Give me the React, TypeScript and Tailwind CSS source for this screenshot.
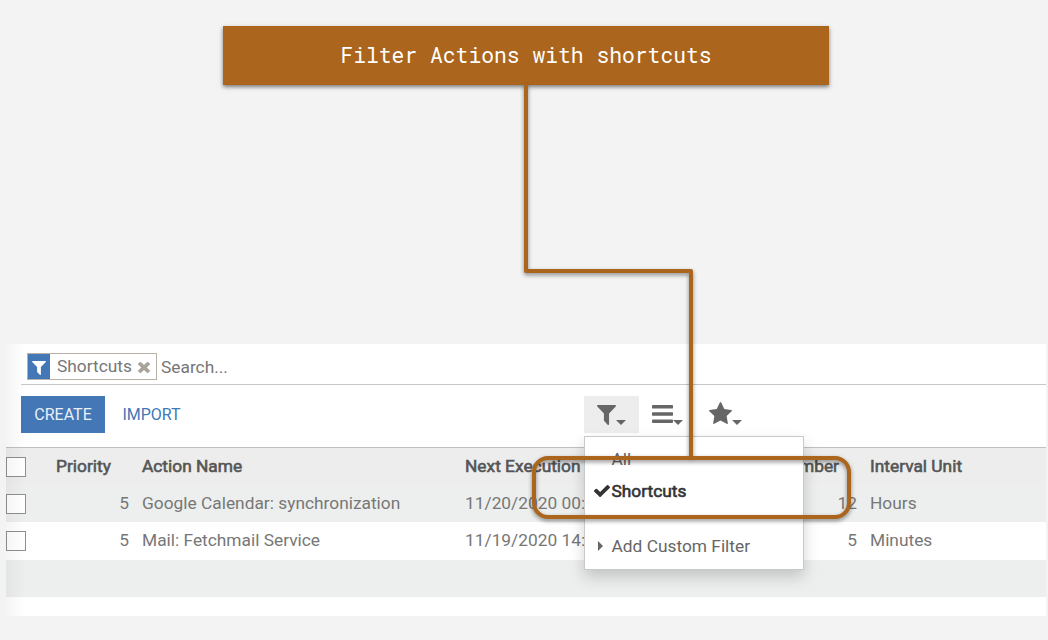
import React from "react";

type IconProps = { className?: string };

const FilterIcon = ({ className }: IconProps) => (
  <svg viewBox="189 256 1414 1408" className={className} fill="currentColor" preserveAspectRatio="none">
    <path d="M1595 295q17 41-14 70l-493 493v742q0 42-39 59-13 5-25 5-27 0-45-19l-256-256q-19-19-19-45v-486l-493-493q-31-29-14-70 17-39 59-39h1280q42 0 59 39z" />
  </svg>
);

const BarsIcon = ({ className }: IconProps) => (
  <svg viewBox="0 0 1536 1280" className={className} fill="currentColor" preserveAspectRatio="none">
    <rect width="1536" height="256" rx="64" />
    <rect y="512" width="1536" height="256" rx="64" />
    <rect y="1024" width="1536" height="256" rx="64" />
  </svg>
);

const StarIcon = ({ className }: IconProps) => (
  <svg viewBox="64 32 1664 1587" className={className} fill="currentColor" preserveAspectRatio="none">
    <path d="M1728 647q0 22-26 48l-363 354 86 500q1 7 1 20 0 21-10.5 35.5t-30.5 14.5q-19 0-40-12l-449-236-449 236q-22 12-40 12-21 0-31.5-14.5t-10.5-35.5q0-6 2-20l86-500-364-354q-25-27-25-48 0-37 56-46l502-73 225-455q19-41 49-41t49 41l225 455 502 73q56 9 56 46z" />
  </svg>
);

const CheckIcon = ({ className }: IconProps) => (
  <svg viewBox="121 334 1550 1188" className={className} fill="currentColor" preserveAspectRatio="none">
    <path d="M1671 566q0 40-28 68l-724 724-136 136q-28 28-68 28t-68-28l-136-136-362-362q-28-28-28-68t28-68l136-136q28-28 68-28t68 28l294 295 656-657q28-28 68-28t68 28l136 136q28 28 28 68z" />
  </svg>
);

const TimesIcon = ({ className }: IconProps) => (
  <svg viewBox="302 366 1188 1188" className={className} fill="currentColor" preserveAspectRatio="none">
    <path d="M1490 1322q0 40-28 68l-136 136q-28 28-68 28t-68-28l-294-294-294 294q-28 28-68 28t-68-28l-136-136q-28-28-28-68t28-68l294-294-294-294q-28-28-28-68t28-68l136-136q28-28 68-28t68 28l294 294 294-294q28-28 68-28t68 28l136 136q28 28 28 68t-28 68l-294 294 294 294q28 28 28 68z" />
  </svg>
);

const Caret = ({ className }: IconProps) => (
  <svg viewBox="0 0 10 5" className={className} fill="currentColor" preserveAspectRatio="none">
    <path d="M0 0h10l-5 5z" />
  </svg>
);

const Checkbox = () => <span className="h-5 w-5 border border-[#8f8f8f] bg-white" />;

const GRID = "grid grid-cols-[50px_86px_323px_235px_170px_1fr] items-center";

const rows = [
  { name: "Google Calendar: synchronization", next: "11/20/2020 00:", number: "12", unit: "Hours", bg: "bg-[#edefee]" },
  { name: "Mail: Fetchmail Service", next: "11/19/2020 14:", number: "5", unit: "Minutes", bg: "bg-white" },
];

function FilterMenu() {
  return (
    <div className="absolute top-[40px] left-0 z-10 flex h-[134px] w-[220px] flex-col border border-[#c9c9c9] bg-white pt-[7px] text-[#666] shadow-[0_7px_14px_rgba(0,0,0,0.18)]">
      <div className="flex h-[31px] items-center pb-px pl-[26.5px]">All</div>
      <div className="flex h-8 items-center pl-[9px] text-[#333]">
        <CheckIcon className="mr-[1.5px] h-3 w-4" />
        <span className="[-webkit-text-stroke:0.6px_currentColor]">Shortcuts</span>
      </div>
      <div className="mt-[10px] h-px bg-[#e5e5e5]" />
      <div className="mt-[12px] flex h-8 items-center pl-[13px]">
        <svg viewBox="0 0 5 10" className="mr-[8.5px] h-[10px] w-[5px]" fill="currentColor">
          <path d="M0 0l5 5-5 5z" />
        </svg>
        Add Custom Filter
      </div>
    </div>
  );
}

export default function App() {
  return (
    <div className="relative flex h-[640px] w-[1048px] flex-col overflow-hidden bg-[#f3f3f3] font-['Roboto','Liberation_Sans',sans-serif] text-[17.33px] leading-5 text-[#777]">
      <header className="mt-[26px] ml-[223px] flex h-[59px] w-[606px] shrink-0 items-center justify-center bg-[#ab651d] pb-[2px] font-['Roboto_Mono','DejaVu_Sans_Mono',monospace] text-[21.33px] text-white shadow-[0_2px_4px_rgba(0,0,0,0.5)]">
        Filter Actions with shortcuts
      </header>

      <main className="relative mt-[259px] ml-[6px] flex h-[272px] w-[1040px] shrink-0 flex-col bg-white">
        <div className="ml-[15px] flex h-[41px] shrink-0 items-center border-b border-[#c8c8c8] pt-[5px] pl-[6px]">
          <div className="flex h-[27px] w-[130px] items-center border border-[#b8b2a8]">
            <span className="flex h-full w-[22px] items-center justify-center bg-[#4377b6] text-white">
              <FilterIcon className="mt-[2px] h-[14px] w-[14px]" />
            </span>
            <span className="ml-[7px] w-[75px] pb-[2px]">Shortcuts</span>
            <TimesIcon className="mt-[2px] ml-[6px] h-[11px] w-3 text-[#aaa399]" />
          </div>
          <span className="mt-px ml-1">Search...</span>
        </div>

        <div className="flex h-[62px] shrink-0 pt-[11px] pl-[15px]">
          <button className="h-[37px] w-[84px] bg-[#4377b6] text-[16px] text-[#e9eff7]">CREATE</button>
          <button className="ml-[17px] h-[37px] w-[59px] text-[16px] text-[#4377b6]">IMPORT</button>
          <div className="relative ml-[403px] flex h-[37px] text-[#666]">
            <div className="flex h-[37px] w-[55px] bg-[#ededed] pt-[9px] pl-[13px]">
              <FilterIcon className="h-5 w-[19px]" />
              <Caret className="mt-[15px] h-[5px] w-[10px]" />
            </div>
            <div className="flex pt-[9px] pl-[13px]">
              <BarsIcon className="h-[18px] w-[21px]" />
              <Caret className="mt-[15px] h-[5px] w-[10px]" />
            </div>
            <div className="flex pt-[6px] pl-[26px]">
              <StarIcon className="h-[22px] w-[23px]" />
              <Caret className="mt-[18px] h-[5px] w-[10px]" />
            </div>
            <FilterMenu />
          </div>
        </div>

        <section className="flex flex-col">
          <div className={`${GRID} h-[38px] border-t border-[#c0c0c0] bg-[#ededed] text-[#555] [-webkit-text-stroke:0.6px_currentColor]`}>
            <Checkbox />
            <span className="pb-[2px]">Priority</span>
            <span className="pb-[2px]">Action Name</span>
            <span className="pb-[2px]">Next Execution</span>
            <span className="pr-[31px] pb-[2px] text-right">Number</span>
            <span className="pb-[2px]">Interval Unit</span>
          </div>
          {rows.map((row) => (
            <div key={row.name} className={`${GRID} h-[37.4px] ${row.bg}`}>
              <Checkbox />
              <span className="pr-[13px] pb-[2px] text-right">5</span>
              <span className="pb-[2px]">{row.name}</span>
              <span className="pb-[2px]">{row.next}</span>
              <span className="pr-[13px] pb-[2px] text-right">{row.number}</span>
              <span className="pb-[2px]">{row.unit}</span>
            </div>
          ))}
          <div className="h-[37.4px] bg-[#edefee]" />
        </section>
        <div className="pointer-events-none absolute inset-y-0 left-0 w-5 bg-linear-to-r from-black/4 to-transparent" />
      </main>

      <svg className="pointer-events-none absolute inset-0 z-20 h-[640px] w-[1048px] drop-shadow-[0_2px_2px_rgba(0,0,0,0.45)]" viewBox="0 0 1048 640" fill="none" stroke="#ab651d" strokeWidth="4">
        <path d="M526 84V271H691V458" strokeLinejoin="round" />
        <rect x="534" y="458" width="315" height="59" rx="14" />
      </svg>
    </div>
  );
}
